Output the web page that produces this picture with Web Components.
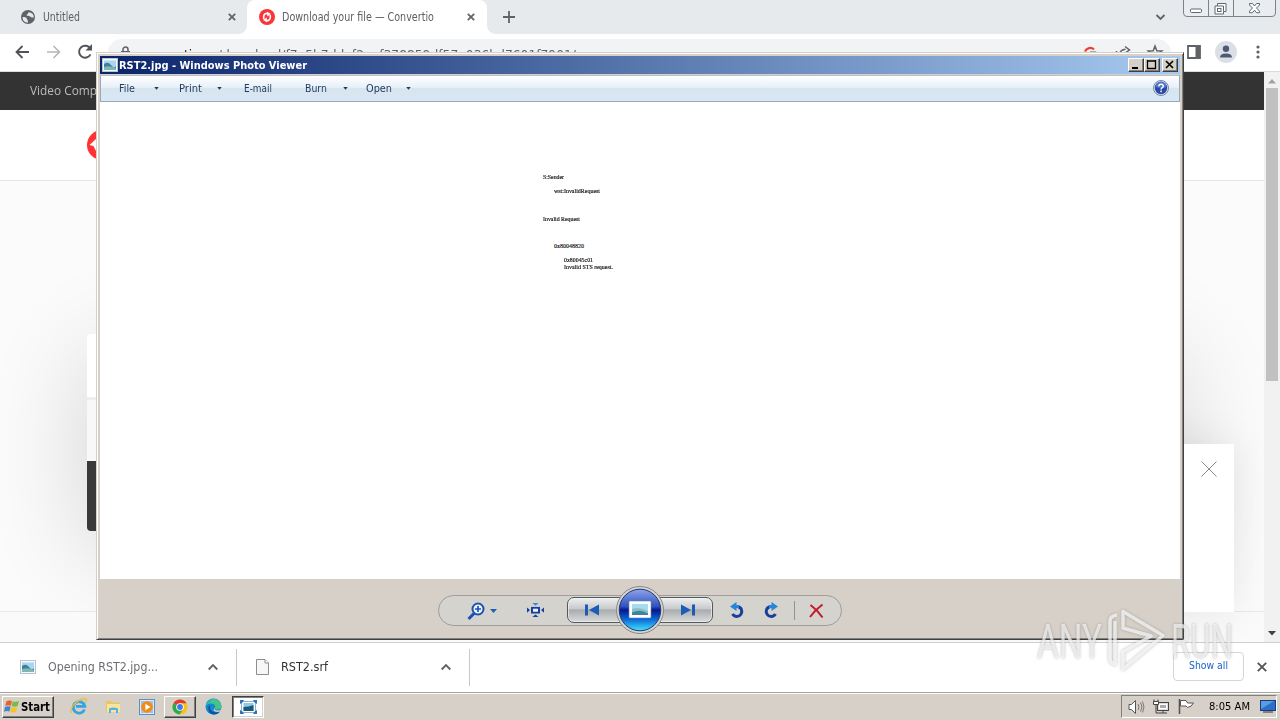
<!DOCTYPE html>
<html lang="en">
<head>
<meta charset="utf-8">
<title>Desktop</title>
<style>
html,body{margin:0;width:1280px;height:720px;overflow:hidden;background:#fff}
body{font-family:"DejaVu Sans","Noto Sans",sans-serif;font-size:12px}
</style>
</head>
<body>
<desk-top></desk-top>
<script>
const define = (name, css, html) => {
  const t = document.createElement('template');
  t.innerHTML = `<style>:host{display:block;box-sizing:border-box}*{box-sizing:border-box}svg{display:block;flex:none;overflow:visible}${css}</style>${html}`;
  customElements.define(name, class extends HTMLElement {
    constructor(){ super(); this.attachShadow({mode:'open'}).append(t.content.cloneNode(true)); }
  });
};

/* Text squeezed or stretched to a given advance width (attribute w). */
customElements.define('fit-text', class extends HTMLElement {
  connectedCallback(){
    if(this.shadowRoot) return;
    const w = +this.getAttribute('w');
    const r = this.attachShadow({mode:'open'});
    r.innerHTML = `<style>:host{display:block;flex:none;width:${w}px;white-space:pre}span{display:inline-block;transform-origin:0 50%}</style><span><slot></slot></span>`;
    const s = r.querySelector('span');
    const n = s.getBoundingClientRect().width;
    if(n) s.style.transform = `scaleX(${w/n})`;
  }
});

const picture = `<svg width="16" height="14" viewBox="0 0 16 14"><rect x=".5" y=".5" width="15" height="13" fill="#f4f8fa" stroke="#b6c6d0"/><rect x="2" y="2.5" width="12" height="9" fill="#a9d6ef"/><path d="M2 6q4-3 7 1t5 1v3.500H2z" fill="#3f7f9c"/><path d="M2 9q6-2 12 1v1.500H2z" fill="#7fb8ae"/></svg>`;

define('tab-strip', `
:host{height:34px;background:#e7eaed;display:flex;color:#5c5f63;font-size:11.500px}
.tab{height:34px;display:flex;align-items:center}
.a{width:247px;padding-left:20px}
.b{width:240px;padding-left:12px;background:#fff;border-radius:8px 8px 0 0;position:relative}
.b:before,.b:after{content:"";position:absolute;bottom:0;width:8px;height:8px}
.b:before{left:-8px;background:radial-gradient(circle at 0 0,transparent 7.500px,#fff 8px)}
.b:after{right:-8px;background:radial-gradient(circle at 100% 0,transparent 7.500px,#fff 8px)}
fit-text{margin-left:7px}
.plus{margin:11px 0 0 16px}.chev{margin:13px 0 0 640px}.win{margin-left:17px}`,
`<div class="tab a"><svg width="16" height="16" viewBox="0 0 16 16"><circle cx="8" cy="8" r="7" fill="#5f6368"/><path d="M2.500 8.200c2-.8 4 .1 4.500 1.800s1.300 1.200.9 3.800A6 6 0 0 1 2.500 8.200zM6.500 5.700c1-.3 1.700-1 1.600-2 1.200-.7 3.400-.2 4.600 1.300 1 1.200 1.200 2.500.7 4.100-.8-.9-2.200-.4-2.800-1.300-.5-.8-4.500-1-4.100-2.100z" fill="#e7eaed"/></svg><fit-text w="37">Untitled</fit-text><svg width="8" height="8" viewBox="0 0 10 10" style="margin-left:148px"><path d="M1 1l8 8M9 1l-8 8" stroke="#5f6368" stroke-width="2.200"/></svg></div>
<div class="tab b"><svg width="16" height="16" viewBox="0 0 16 16"><circle cx="8" cy="8" r="8" fill="#fb3439"/><path d="M4.700 10V7.300a3.100 3.100 0 0 1 4.600-2.500M11.300 6v2.700a3.100 3.100 0 0 1-4.600 2.500" fill="none" stroke="#fff" stroke-width="1.600"/><path d="M8 2.800l4 2.300-3.700 2.400zM8 13.200l-4-2.300 3.700-2.400z" fill="#fff"/></svg><fit-text w="152">Download your file — Convertio</fit-text><svg width="8" height="8" viewBox="0 0 10 10" style="margin-left:33px"><path d="M1 1l8 8M9 1l-8 8" stroke="#5f6368" stroke-width="2.200"/></svg></div>
<svg class="plus" width="12" height="12" viewBox="0 0 12 12"><path d="M6 0v12M0 6h12" stroke="#5f6368" stroke-width="1.800"/></svg>
<svg class="chev" width="11" height="8" viewBox="0 0 11 8"><path d="M1.500 2l4 4 4-4" fill="none" stroke="#5f6368" stroke-width="1.800"/></svg>
<svg class="win" width="93" height="17" viewBox="0 0 93 17"><path d="M.5 0v13q0 3.500 3.500 3.500h85q3.500 0 3.500-3.500V0M25.500 0v16M50.500 0v16" fill="#eaedf0" stroke="#7c848b"/><rect x="7.500" y="9" width="11" height="3.500" rx="1" fill="#fff" stroke="#5d6873"/><path d="M34.500 3.500h8.500v8h-2.500v2.500h-8.500v-8h2.500z" fill="#fff" stroke="#5d6873"/><path d="M34.500 6h6v5.500" fill="none" stroke="#5d6873"/><rect x="34.500" y="8.500" width="3.500" height="3" fill="#fff" stroke="#5d6873"/><path d="M66.500 3.500h3l2 2.500 2-2.500h3v1.500L73.500 8l3 3.200v1.500h-3l-2-2.500-2 2.500h-3v-1.500l3-3.200-3-3z" fill="#fff" stroke="#5d6873"/></svg>`);

define('tool-bar', `
:host{height:38px;background:#fff;display:flex;align-items:center;border-bottom:1px solid #dadce0;padding-left:15px}
.pill{width:1063px;height:28px;border-radius:14px;background:#f1f3f4;display:flex;align-items:center;margin-left:15px;padding-left:12px;color:#5f6368;font-size:13px}
.ic{margin-left:17px}.pill svg{margin-top:0}
fit-text{margin:4px 0 0 11px}b{font-weight:400;color:#202124}`,
`<svg width="14" height="14" viewBox="0 0 14 14" style="margin-top:-2px"><path d="M14 7H1.500M7.500 1l-6 6 6 6" fill="none" stroke="#505357" stroke-width="1.800"/></svg>
<svg width="14" height="14" viewBox="0 0 14 14" style="margin:-2px 0 0 18px"><path d="M0 7h12.500M6.500 1l6 6-6 6" fill="none" stroke="#b5b7ba" stroke-width="1.600"/></svg>
<svg class="ic" width="15" height="15" viewBox="0 0 15 15" style="margin-top:-2px"><path d="M12.500 10.300a6 6 0 1 1-.2-5.600" fill="none" stroke="#505357" stroke-width="1.900"/><path d="M14 0v6.500H7.500z" fill="#505357"/></svg>
<div class="pill"><svg width="11" height="13" viewBox="0 0 11 13"><rect x="1" y="5" width="9" height="7.500" fill="#5f6368"/><path d="M3 5V3.500a2.500 2.500 0 0 1 5 0V5" fill="none" stroke="#5f6368" stroke-width="1.500"/></svg>
<fit-text w="434"><b>convertio.co</b>/download/f7a5b7ddef2eef378859df57e036bd7601f7901/</fit-text>
<svg width="14" height="14" viewBox="0 0 14 14" style="margin-left:507px"><path d="M2 5.500a5.500 5.500 0 0 1 9-2" fill="none" stroke="#ea4335" stroke-width="2.200"/><path d="M2 5.500a5.500 5.500 0 0 0 1 5" fill="none" stroke="#fbbc05" stroke-width="2"/><path d="M7 6.200h5.500q0 5.500-5.500 6" fill="none" stroke="#5f6368" stroke-width="1.500"/></svg>
<svg width="16" height="14" viewBox="0 0 16 14" style="margin-left:18px"><path d="M1.500 5v8h11v-3M4.500 9q.5-5.500 6-5.700M10 .5l4.500 3.500L10 7" fill="none" stroke="#5f6368" stroke-width="1.500"/></svg>
<svg width="16" height="15" viewBox="0 0 16 15" style="margin-left:16px"><path d="M8 1l1.800 4.700 5 .3-3.900 3.200L12.300 14 8 11.300 3.700 14l1.400-4.800L1.200 6l5-.3z" fill="none" stroke="#5f6368" stroke-width="1.500"/></svg></div>
<svg width="14" height="14" viewBox="0 0 14 14" style="margin:-2px 0 0 16px"><path d="M1 1h12v12H1z" fill="#fff" stroke="#5f6368" stroke-width="1.800"/><path d="M8.500 1H13v12H8.500z" fill="#5f6368"/></svg>
<svg width="22" height="22" viewBox="0 0 22 22" style="margin:-2px 0 0 14px"><circle cx="11" cy="11" r="11" fill="#dce0e6"/><circle cx="11" cy="7.800" r="3.200" fill="#4c5a75"/><path d="M5 16.500q0-4 6-4t6 4z" fill="#4c5a75"/></svg>
<svg width="4" height="14" viewBox="0 0 4 14" style="margin:-1px 0 0 19px"><g fill="#5f6368"><circle cx="2" cy="2" r="1.600"/><circle cx="2" cy="7" r="1.600"/><circle cx="2" cy="12" r="1.600"/></g></svg>`);

define('web-page', `
:host{height:570px;display:flex;background:#fafafa;overflow:hidden}
.doc{width:1264px;height:570px;position:relative;overflow:hidden;display:flex;flex-direction:column}
.dark{height:38px;background:#333;color:#bdbdbd;font-family:"Open Sans",sans-serif;font-size:12px;padding:10px 0 0 30px;flex:none;line-height:18px}
.head{height:71px;background:#fff;border-bottom:1px solid #e4e4e4;padding:20px 0 0 87px;flex:none}
.main{height:431px;position:relative;border-bottom:1px solid #e8e8e8;overflow:hidden;padding:153px 87px 0;flex:none;background:#fbfbfb}
.foot{flex:1;background:#fafafa}
.card{height:197px;border-radius:4px;box-shadow:0 20px 100px rgba(0,0,0,.16);overflow:hidden}
.c1{height:63px;background:#fff}.c2{height:64px;background:#f8f8f8;border-top:3px solid #eee}.c3{height:70px;background:#393939}
.pop{position:absolute;right:30px;top:372px;width:400px;height:168px;background:#fff;box-shadow:0 0 40px rgba(0,0,0,.09);display:flex;justify-content:flex-end;padding:17px 17px 0}
.bar{width:16px;background:#f1f1f1;display:flex;flex-direction:column;align-items:center}
.thumb{width:12px;height:293px;background:#c1c1c1;margin-top:4px}`,
`<div class="doc"><div class="dark"><fit-text w="67">Video Comp</fit-text></div>
<div class="head"><svg width="30" height="30" viewBox="0 0 30 30"><circle cx="15" cy="15" r="15" fill="#ff3333"/><path d="M2.500 15L9 9v4l6 8-6 0-2.500-5z" fill="#fff"/></svg></div>
<div class="main"><div class="card"><div class="c1"></div><div class="c2"></div><div class="c3"></div></div></div><div class="foot"></div>
<div class="pop"><svg width="16" height="16" viewBox="0 0 16 16"><path d="M.5.500l15 15M15.500.500l-15 15" stroke="#8b8b8b"/></svg></div></div>
<div class="bar"><svg width="8" height="5" viewBox="0 0 8 5" style="margin-top:7px"><path d="M0 4.500L4 0l4 4.500z" fill="#a3a3a3"/></svg><div class="thumb"></div><svg width="8" height="5" viewBox="0 0 8 5" style="margin-top:250px"><path d="M0 0h8L4 4.500z" fill="#404040"/></svg></div>`);

define('download-bar', `
:host{height:50px;background:#fff;border-top:1px solid #cfcfcf;display:flex;align-items:center;color:#303236}
.it{display:flex;align-items:center;height:37px;border-right:1px solid #c9c9c9}.it fit-text,.it svg{margin-top:-2px}
.it.a{width:237px;padding-left:20px;color:#6b6e72}.it.b{width:233px;padding-left:19px}
.btn{width:71px;height:29px;border:1px solid #d4d6d9;border-radius:4px;margin:-2px 0 0 703px;color:#1a62c9;font-size:11px;line-height:26px;padding-left:15px}`,
`<div class="it a">${picture}<fit-text w="110" style="margin-left:12px">Opening RST2.jpg...</fit-text><svg width="10" height="6" viewBox="0 0 10 6" style="margin-left:50px"><path d="M.7 5.500L5 1.200l4.300 4.300" fill="none" stroke="#5f6368" stroke-width="1.900"/></svg></div>
<div class="it b"><svg width="13" height="16" viewBox="0 0 13 16"><path d="M.5.500h8.500l3.500 3.500v11.500H.5z" fill="#f7f7f7" stroke="#8e8e8e"/><path d="M9 .5V4h3.500" fill="#fff" stroke="#8e8e8e"/></svg><fit-text w="47" style="margin-left:12px">RST2.srf</fit-text><svg width="10" height="6" viewBox="0 0 10 6" style="margin-left:113px"><path d="M.7 5.500L5 1.200l4.300 4.300" fill="none" stroke="#5f6368" stroke-width="1.900"/></svg></div>
<div class="btn"><fit-text w="39">Show all</fit-text></div>
<svg width="10" height="10" viewBox="0 0 10 10" style="margin:-2px 0 0 13px"><path d="M.8.800l8.400 8.400M9.200.800L.8 9.200" stroke="#505357" stroke-width="1.800"/></svg>`);

define('task-bar', `
:host{height:28px;background:#d6d0c8;border-top:1px solid #a9a59f;box-shadow:inset 0 1px #fbfaf8;display:flex;align-items:center;padding:1px 3px 1px 2px;color:#000}
.btn{height:22px;background:#d6d0c8;border:1px solid;border-color:#fff #404040 #404040 #fff;box-shadow:inset -1px -1px #808080;display:flex;align-items:center}
.start{width:52px;padding-left:1px;font-weight:bold;font-size:11.500px}
.chrome{width:32px;margin-left:9px;justify-content:center}
.down{width:32px;margin-left:10px;justify-content:center;background:#fff;border-color:#404040 #fff #fff #404040;box-shadow:inset 1px 1px #808080,inset -1px -1px #d6d0c8}
.tray{margin-left:auto;width:156px;height:23px;border:1px solid;border-color:#808080 #fff #fff #808080;display:flex;align-items:center;padding-left:6px;font-size:11px}`,
`<div class="btn start"><svg width="16" height="15" viewBox="0 0 16 15"><path d="M2.500 2.300Q5 .7 8 2L6.800 6.800Q4 5.600 1.300 7z" fill="#e9602c"/><path d="M8.800 2.300q3 1.200 6.200-.2l-1.300 5q-3 1.300-6.100-.1z" fill="#7fb843"/><path d="M1 8q3-1.400 5.600-.2l-1.200 4.700Q3 11.300 0 12.700z" fill="#3f86d2"/><path d="M7.300 8.100q3 1.300 6.100.1l-1.300 4.700q-3 1.400-6 0z" fill="#f6c22d"/></svg><fit-text w="29" style="margin-left:1px">Start</fit-text></div>
<svg width="18" height="17" viewBox="0 0 18 17" style="margin-left:16px"><path d="M14.500 11.500A5.800 5.800 0 1 1 14.800 8.300H6" fill="none" stroke="#35a4e0" stroke-width="2.800"/><path d="M2 14.500Q-1 14 3 8T13 1q5-1.500 2.500 3.500" fill="none" stroke="#e8bc3c" stroke-width="1.300"/></svg>
<svg width="17" height="15" viewBox="0 0 17 15" style="margin-left:17px"><path d="M1 2h5l1 1.500h8V13H1z" fill="#e9c665"/><path d="M2 5h13v8H2z" fill="#f8e59a"/><path d="M4 14V9.500q4.500-2 9 0V14h-2v-3H6v3z" fill="#55b3e4"/></svg>
<svg width="16" height="16" viewBox="0 0 16 16" style="margin-left:17px"><rect x=".5" y=".5" width="15" height="15" fill="#dceaf5" stroke="#5a91c4"/><rect x="2" y="2" width="12" height="12" fill="#9fc4e6"/><circle cx="8" cy="8" r="5.800" fill="#f28a17"/><path d="M6.300 4.800v6.400L11.500 8z" fill="#fff"/></svg>
<div class="btn chrome"><svg width="16" height="16" viewBox="0 0 16 16"><circle cx="8" cy="8" r="7.500" fill="#fbc116"/><path d="M8 8L1.500 4.200A7.500 7.500 0 0 1 14.500 4.200H8z" fill="#e33b2e"/><path d="M8 8L1.500 4.200A7.500 7.500 0 0 0 7.500 15.500L11.200 10z" fill="#2da94f"/><circle cx="8" cy="8" r="3.800" fill="#fff"/><circle cx="8" cy="8" r="2.900" fill="#3c79e6"/></svg></div>
<svg width="17" height="17" viewBox="0 0 17 17" style="margin-left:9px"><circle cx="8.500" cy="8.500" r="8" fill="#1687cd"/><path d="M1 6.500A8 8 0 0 1 16.500 8q0 3.500-4 3.500-3 0-3-1.500 1-1 .5-2.500-.8-2-4-2T1 7.500z" fill="#45c38b"/><path d="M1 6.500Q3 1 8.500.5q-3 1-4 4-2 0-3.500 3z" fill="#28a9dd"/><path d="M5 7q-1.500 7 6 7.500 3 0 4.500-1.500-3 4-7 3.500-4-.5-5-5Q3 8 5 7z" fill="#0e4f9e"/><path d="M9.500 10q-.5 2.500 3.500 2.500 2.500 0 3.500-1.500l-.5 2q-3 1.500-6 .5-2.500-1.500-.5-3.500z" fill="#d6d0c8"/></svg>
<div class="btn down"><svg width="17" height="14" viewBox="0 0 17 14"><rect x="1.500" y="1.500" width="14" height="11" fill="#fff" stroke="#8fb2cc"/><rect x="3.500" y="3" width="10" height="8" fill="#8ccbee"/><path d="M3.500 7q5 0 10-2v6h-10z" fill="#1d5878"/><path d="M0 4V0h4l-1.500 2.500zM17 4V0h-4l1.500 2.500zM0 10v4h4l-1.500-2.500zM17 10v4h-4l1.500-2.500z" fill="#2f75b5"/></svg></div>
<div class="tray"><svg width="17" height="14" viewBox="0 0 17 14"><path d="M1 4.500h2.500l4-4v13l-4-4H1z" fill="#fff" stroke="#555"/><path d="M10 4q2 3 0 6M12.500 2.500q3 4.500 0 9M14.500 1.500q3 5.500 0 11" fill="none" stroke="#777"/></svg>
<svg width="16" height="15" viewBox="0 0 16 15" style="margin-left:8px"><rect x="4.500" y="3.500" width="11" height="8" fill="#ddd" stroke="#444"/><rect x="6.500" y="5.500" width="7" height="4" fill="#aaa" stroke="#fff"/><path d="M7 14h7M10 12v2M3 6v8h4" fill="none" stroke="#444"/><path d="M1 .5v2M5 .5v2M.5 2.500h5v3h-5z" fill="#fff" stroke="#444"/></svg>
<svg width="16" height="15" viewBox="0 0 16 15" style="margin-left:9px"><path d="M1.500 0v15" stroke="#555" stroke-width="1.600"/><path d="M2.500 1.500h5.500l1.500 2.500h6q-2 4-6 4.500L8 7H2.500z" fill="#fff" stroke="#555"/></svg>
<fit-text w="41" style="margin-left:15px">8:05 AM</fit-text>
<svg width="16" height="13" viewBox="0 0 16 13" style="margin-left:10px"><rect x=".5" y=".5" width="15" height="10" fill="#2b6fc9" stroke="#173c78"/><path d="M1 9L14 1H1z" fill="#5a9ce4"/><path d="M3 12h10" stroke="#333"/></svg></div>`);

define('title-bar', `
:host{height:18px;background:linear-gradient(90deg,#0a246a,#a6caf0);display:flex;align-items:center;color:#fff;font-weight:bold;font-size:11px;padding:0 2px 0 2px}
i{display:block;width:16px;height:14px;background:#d6d0c8;border:1px solid;border-color:#fff #404040 #404040 #fff;box-shadow:inset -1px -1px #808080}
.n{margin-left:auto}.x{margin-left:2px}`,
`${picture}<fit-text w="188" style="margin-left:1px">RST2.jpg - Windows Photo Viewer</fit-text>
<i class="n"><svg width="14" height="12"><path d="M3 9h6" stroke="#000" stroke-width="2"/></svg></i><i><svg width="14" height="12"><path d="M2.500 1v8.500h8V1M2 2h9" fill="none" stroke="#000" stroke-width="1.300"/></svg></i><i class="x"><svg width="14" height="12"><path d="M3 2l7 7M10 2L3 9" stroke="#000" stroke-width="1.700"/></svg></i>`);

define('menu-bar', `
:host{height:27px;border:1px solid #98a9bc;border-top-color:#b7c0cc;background:linear-gradient(#fff,#e7f0f8 45%,#d7e5f1 50%,#d9e7f2);display:flex;align-items:center;color:#1e395b;font-size:11px;padding-left:18px;margin-top:1px}
svg.d{width:5px;height:3px}fit-text{margin-top:-1px}.h{margin-left:742px;margin-top:-2px}`,
`<fit-text w="16">File</fit-text><svg class="d" style="margin-left:19px" viewBox="0 0 6 4"><path d="M0 0h6L3 3.500z" fill="#1e395b"/></svg>
<fit-text w="23" style="margin-left:20px">Print</fit-text><svg class="d" style="margin-left:15px" viewBox="0 0 6 4"><path d="M0 0h6L3 3.500z" fill="#1e395b"/></svg>
<fit-text w="28" style="margin-left:22px">E-mail</fit-text><fit-text w="22" style="margin-left:33px">Burn</fit-text><svg class="d" style="margin-left:16px" viewBox="0 0 6 4"><path d="M0 0h6L3 3.500z" fill="#1e395b"/></svg>
<fit-text w="26" style="margin-left:18px">Open</fit-text><svg class="d" style="margin-left:14px" viewBox="0 0 6 4"><path d="M0 0h6L3 3.500z" fill="#1e395b"/></svg>
<svg class="h" width="16" height="16" viewBox="0 0 16 16"><circle cx="8" cy="8" r="7.500" fill="#dfe5f2" stroke="#7988a8"/><circle cx="8" cy="8" r="6.200" fill="#2648a8"/><path d="M2.500 7a5.500 5.500 0 0 1 11 0q-5 2-11 0z" fill="#5878c6"/><path d="M5.800 6.300q.1-2 2.300-2t2.200 1.800q0 1.200-1.300 1.800-.9.500-.9 1.500M8.100 10.500v1.700" fill="none" stroke="#fff" stroke-width="1.500"/></svg>`);

define('photo-page', `
:host{height:477px;background:#fff;font:6px/7px "Liberation Serif",serif;color:#111;-webkit-text-stroke:.15px #111;padding:72px 0 0 443px}
fit-text{height:7px}`,
`<fit-text w="21">S:Sender</fit-text><fit-text w="46" style="margin:7px 0 0 11px">wst:InvalidRequest</fit-text><fit-text w="37" style="margin-top:21px">Invalid Request</fit-text><fit-text w="30" style="margin:20px 0 0 11px">0x80048820</fit-text><fit-text w="29" style="margin:7px 0 0 21px">0x80045c01</fit-text><fit-text w="49" style="margin:0 0 0 21px">Invalid STS request.</fit-text>`);

define('photo-controls', `
:host{height:59px;background:#d6d0c8;display:flex;justify-content:center;padding-top:16px}
.pill{width:404px;height:31px;border:1px solid #9d9d9b;border-radius:16px;background:#d4d3ce;display:flex;align-items:center;padding-left:28px}
.nav{position:relative;width:146px;height:26px;border:1px solid #55585c;border-radius:7px;background:linear-gradient(#eff0f0,#c7c9ca 45%,#a9acae 50%,#d9dbdb);box-shadow:inset 0 0 0 1px #f3f3f3aa;display:flex;align-items:center;justify-content:space-between;padding:0 16px;margin:-1px 0 0 23px}
.orb{position:absolute;left:48px;top:-12px}`,
`<div class="pill">
<svg width="18" height="18" viewBox="0 0 18 18"><path d="M7 11.500L1.500 17" stroke="#1c50b4" stroke-width="3"/><circle cx="11" cy="7" r="5.500" fill="#eef6ff" stroke="#1c50b4" stroke-width="2"/><path d="M11 4v6M8 7h6" stroke="#1c50b4" stroke-width="1.700"/></svg>
<svg width="7" height="4" viewBox="0 0 7 4" style="margin-left:5px"><path d="M0 0h7L3.500 4z" fill="#1c60bd"/></svg>
<svg width="17" height="14" viewBox="0 0 17 16" preserveAspectRatio="none" style="margin:-1px 0 0 30px"><rect x="5" y="5.500" width="7" height="5.500" fill="#e7f0fa" stroke="#183f9c" stroke-width="2"/><path d="M5.500 0h6l-3 3z" fill="#338bc8"/><path d="M5.500 16h6l-3-3zM0 5v6l3-3zM17 5v6l-3-3z" fill="#183f9c"/></svg>
<div class="nav"><svg width="16" height="12" viewBox="0 0 16 12"><path d="M1 .5h3v11H1zM15 .5v11L5 6z" fill="#1d5bb4"/></svg><svg width="16" height="12" viewBox="0 0 16 12"><path d="M12 .5h3v11h-3zM1 .5v11L11 6z" fill="#1d5bb4"/></svg>
<svg class="orb" width="48" height="48" viewBox="0 0 48 48"><defs><linearGradient id="g" x2="0" y2="1"><stop offset="0" stop-color="#8da5ec"/><stop offset=".42" stop-color="#2f50bd"/><stop offset=".5" stop-color="#06168c"/><stop offset=".72" stop-color="#0a68d4"/><stop offset="1" stop-color="#41e4ff"/></linearGradient></defs><circle cx="24" cy="24" r="23.500" fill="#d6d5d2" stroke="#85878b"/><circle cx="24" cy="24" r="20.800" fill="url(#g)" stroke="#25376f"/><rect x="13" y="15" width="22" height="17" rx="1" fill="#fff" stroke="#6e89b5" stroke-width=".6"/><rect x="16" y="18" width="16" height="11" fill="#a6dcf2"/><path d="M16 23q7-3 16 2v4H16z" fill="#8bc0c0"/><path d="M16 26.500q8-4 16 1V29H16z" fill="#3f83a2"/></svg></div>
<svg width="15" height="17" viewBox="0 0 15 17" style="margin-left:17px"><path d="M5 4.500h2.500a5 5 0 1 1-5 7.500" fill="none" stroke="#1a3e9d" stroke-width="3"/><path d="M0 4.500L6.500 0v9z" fill="#2586dc"/><path d="M5 3h4v3H5z" fill="#2586dc"/></svg>
<svg width="15" height="17" viewBox="0 0 15 17" style="margin-left:18px"><path d="M10 4.500H7.500a5 5 0 1 0 5 7.500" fill="none" stroke="#1a3e9d" stroke-width="3"/><path d="M15 4.500L8.500 0v9z" fill="#2586dc"/><path d="M6 3h4v3H6z" fill="#2586dc"/></svg>
<svg width="1" height="19" style="margin-left:16px"><path d="M.5 0v19" stroke="#93938f"/></svg>
<svg width="15" height="14" viewBox="0 0 15 14" style="margin-left:14px"><path d="M1.500 1q7 5 12 12.500M13.500.5Q6 6 1 13" fill="none" stroke="#c11a2b" stroke-width="2"/></svg>
</div>`);

define('photo-window', `
:host{position:absolute;left:96px;top:52px;width:1088px;height:588px;background:#d6d0c8;border:1px solid;border-color:#d6d0c8 #404040 #404040 #d6d0c8;box-shadow:inset 1px 1px #fff,inset -1px -1px #808080;padding:3px}
.in{width:1080px}`,
`<div class="in"><title-bar></title-bar><menu-bar></menu-bar><photo-page></photo-page><photo-controls></photo-controls></div>`);

define('water-mark', `
:host{position:absolute;left:1037px;top:609px;height:63px;display:flex;align-items:center;font:49px/50px Roboto,sans-serif;color:rgba(255,255,255,.68);text-shadow:0 0 3px rgba(100,100,100,.5);pointer-events:none}
fit-text{margin-top:2px}svg{margin:0 6px;filter:drop-shadow(0 0 1.500px rgba(100,100,100,.6))}`,
`<fit-text w="65">ANY</fit-text><svg width="57" height="63" viewBox="0 0 57 63"><g fill="none" stroke="#fff" stroke-opacity=".7" stroke-width="3.500" stroke-linejoin="round"><path d="M9 6Q2 7 2 12v37q0 5 5 6V12M15 19V2.500L55 26.500 15 60V43L43 27z"/></g></svg><fit-text w="62">RUN</fit-text>`);

define('desk-top', `:host{position:relative;display:flex;flex-direction:column;width:1280px;height:720px;overflow:hidden}`,
`<tab-strip></tab-strip><tool-bar></tool-bar><web-page></web-page><download-bar></download-bar><task-bar></task-bar><photo-window></photo-window><water-mark></water-mark>`);
</script>
</body>
</html>
